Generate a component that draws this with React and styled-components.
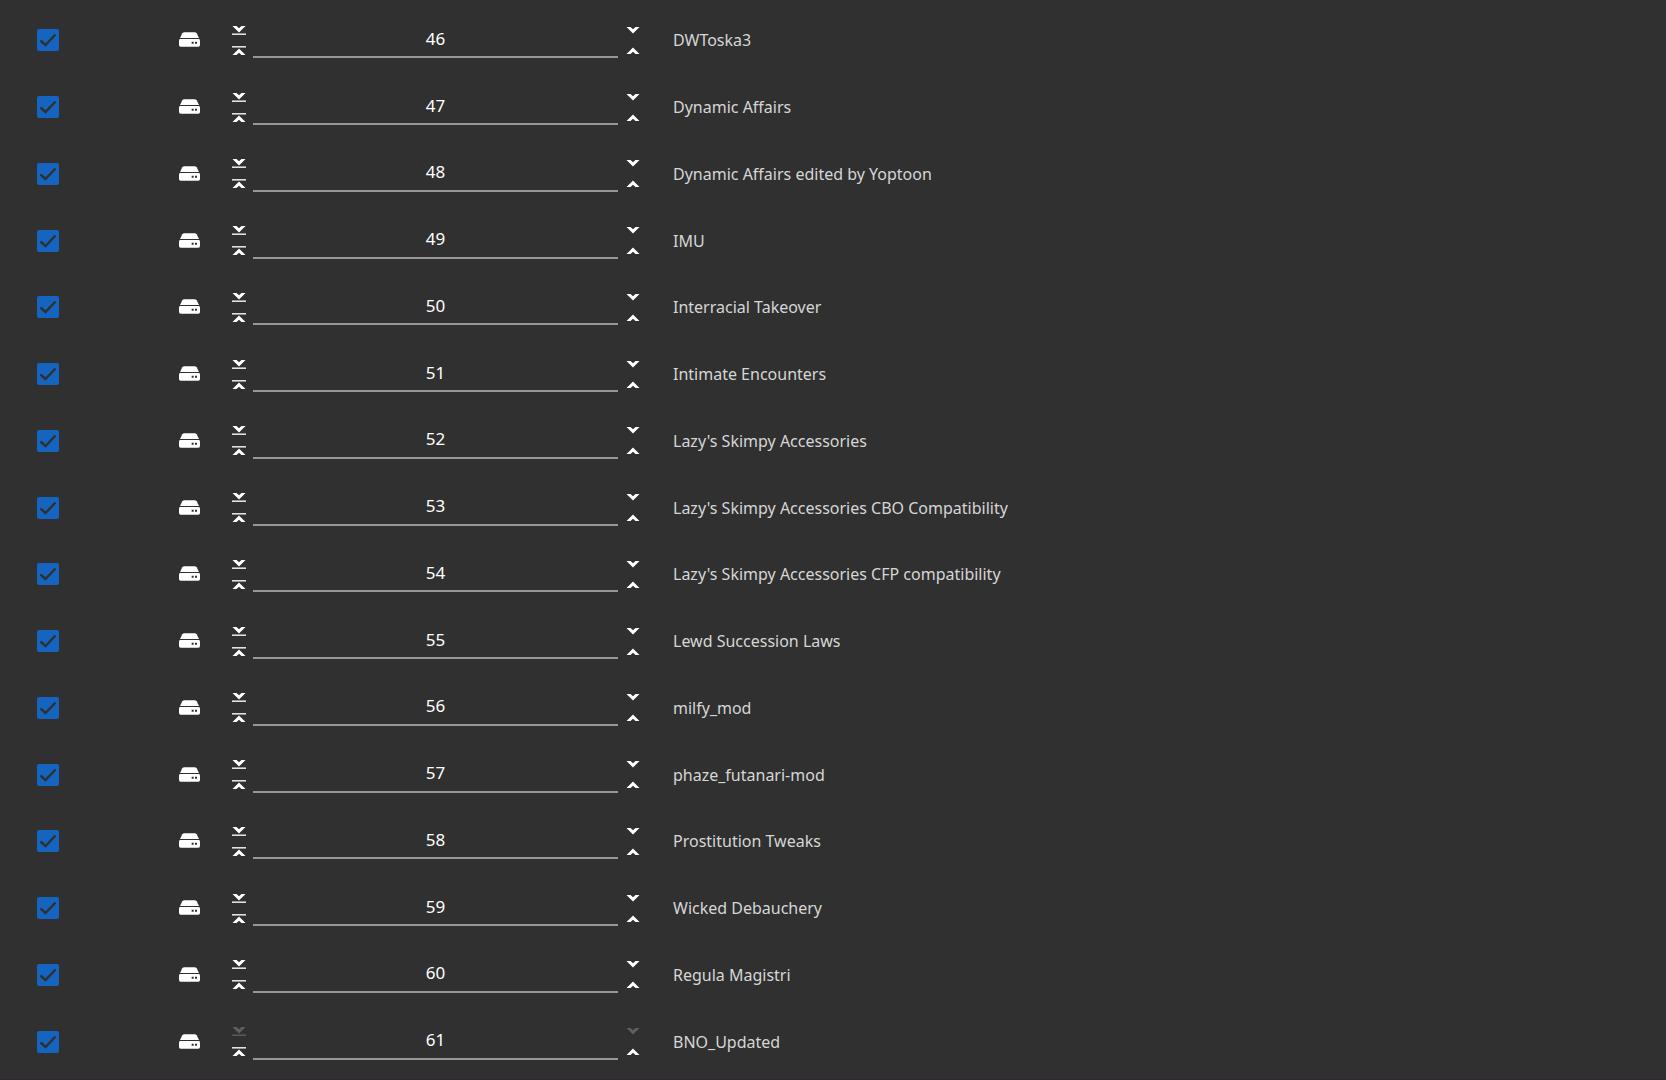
import React, { useState } from 'react';
import styled, { createGlobalStyle } from 'styled-components';

const GlobalStyle = createGlobalStyle`
   body {
      margin: 0;
      background: #303030;
      color: #d6d6d6;
      font-family: "Noto Sans", sans-serif;
   }
`;

const ModList = styled.ul`
   box-sizing: border-box;
   min-height: 100vh;
   margin: 0;
   padding: 7px 0 4px;
   border-bottom: 1px solid #2d292e;
   list-style: none;
   display: flex;
   flex-direction: column;
`;

const ModRow = styled.li`
   flex: 1;
   display: grid;
   grid-template-columns: 142px 53px 21px minmax(120px, 365px) 22px 1fr;
   align-items: center;
   padding-left: 37px;
`;

const CheckCell = styled.label`
   display: grid;
   width: 22px;
   height: 22px;

   input,
   svg {
      grid-area: 1 / 1;
      width: 22px;
      height: 22px;
      margin: 0;
   }
   input {
      appearance: none;
      border-radius: 2px;
      border: 2px solid #8d8d8d;
   }
   input:checked {
      background: #1565c0;
      border: 0;
   }
   svg {
      pointer-events: none;
      visibility: hidden;
   }
   input:checked + svg {
      visibility: visible;
   }
`;

const DriveSvg = styled.svg`
   display: block;
   width: 21px;
   height: 16px;
   fill: #ffffff;
`;

const ButtonStack = styled.div`
   display: flex;
   flex-direction: column;
   gap: 9px;
   justify-self: ${(props) => (props.$end ? 'end' : 'start')};
`;

const ArrowButton = styled.button`
   display: block;
   width: 14px;
   height: 10px;
   padding: 0;
   border: 0;
   background: none;
   color: #ffffff;

   &:disabled {
      color: #5f5f5f;
   }
   svg {
      display: block;
   }
`;

const OrderInput = styled.input`
   box-sizing: border-box;
   width: 100%;
   height: 36px;
   padding: 0 0 2px;
   border: 0;
   border-bottom: 2px solid #979797;
   outline: none;
   background: transparent;
   color: #ffffff;
   font-family: inherit;
   font-size: 17px;
   line-height: 24px;
   text-align: center;
`;

const ModName = styled.span`
   padding-left: 33px;
   font-size: 16px;
   line-height: 24px;
   white-space: nowrap;
`;

const names = [
   'DWToska3',
   'Dynamic Affairs',
   'Dynamic Affairs edited by Yoptoon',
   'IMU',
   'Interracial Takeover',
   'Intimate Encounters',
   "Lazy's Skimpy Accessories",
   "Lazy's Skimpy Accessories CBO Compatibility",
   "Lazy's Skimpy Accessories CFP compatibility",
   'Lewd Succession Laws',
   'milfy_mod',
   'phaze_futanari-mod',
   'Prostitution Tweaks',
   'Wicked Debauchery',
   'Regula Magistri',
   'BNO_Updated',
];

const mods = names.map((name, i) => ({ name, order: 46 + i }));

function DriveIcon() {
   return (
      <DriveSvg viewBox="0 0 63 48" aria-hidden="true">
         <path d="M16 1H47Q51 1 53 4L60 18H3L10 4Q12 1 16 1Z" />
         <path
            fillRule="evenodd"
            d="M2 21H61Q63 24 63 27V39Q63 44 58 44H5Q0 44 0 39V27Q0 24 2 21ZM38 29V35H44V29ZM48 29V35H54V29Z"
         />
      </DriveSvg>
   );
}

function Arrow({ label, up, bar, disabled }) {
   return (
      <ArrowButton type="button" aria-label={label} disabled={disabled}>
         <svg width="14" height="10" viewBox="0 0 14 10" fill="currentColor">
            <g transform={up ? 'rotate(180 7 5)' : undefined}>
               <path d={bar ? 'M0.5 0H4.5L7 2.2L9.5 0H13.5L7 6.6Z' : 'M0.5 1H4.5L7 3.2L9.5 1H13.5L7 7.6Z'} />
               {bar && <path d="M0 7.4H14V9H0Z" opacity="0.85" />}
            </g>
         </svg>
      </ArrowButton>
   );
}

function Mod({ name, order, last }) {
   const [enabled, setEnabled] = useState(true);
   const [position, setPosition] = useState(order);
   return (
      <ModRow>
         <CheckCell>
            <input
               type="checkbox"
               aria-label={name}
               checked={enabled}
               onChange={(e) => setEnabled(e.target.checked)}
            />
            <svg viewBox="0 0 22 22" fill="none" stroke="#303030" strokeWidth="2.4">
               <path d="M3.5 11.5L8.5 16L18.5 5.5" />
            </svg>
         </CheckCell>
         <DriveIcon />
         <ButtonStack>
            <Arrow label="Move to bottom" bar disabled={last} />
            <Arrow label="Move to top" bar up />
         </ButtonStack>
         <OrderInput
            type="text"
            aria-label={`Order of ${name}`}
            value={position}
            onChange={(e) => setPosition(e.target.value)}
         />
         <ButtonStack $end>
            <Arrow label="Move down" disabled={last} />
            <Arrow label="Move up" up />
         </ButtonStack>
         <ModName>{name}</ModName>
      </ModRow>
   );
}

export default function App() {
   return (
      <>
         <GlobalStyle />
         <ModList>
            {mods.map((mod, i) => (
               <Mod key={mod.order} {...mod} last={i === mods.length - 1} />
            ))}
         </ModList>
      </>
   );
}
